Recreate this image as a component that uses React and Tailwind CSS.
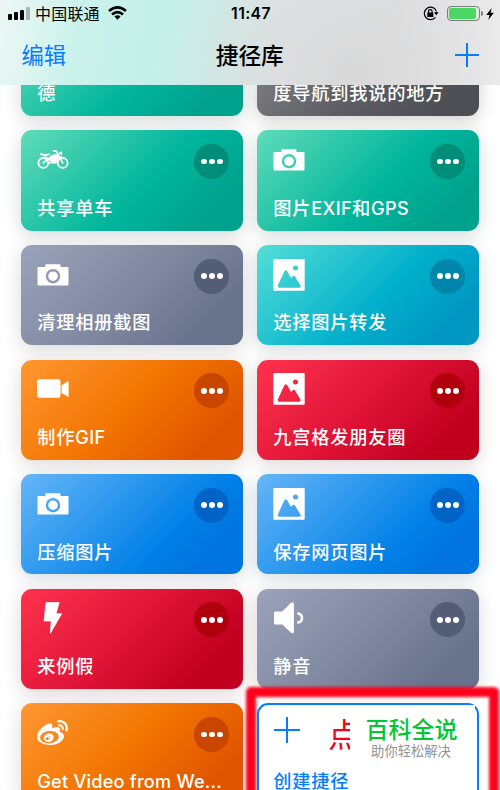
import { FaWeibo } from "react-icons/fa";

const GREEN = { card: "bg-[linear-gradient(135deg,#60dcb9_0%,#00b59c_56%,#00a18d_86%)] shadow-[0_4px_18px_rgba(0,60,50,0.18)]", dot: "bg-[#008d79]" };
const GRAY = { card: "bg-[linear-gradient(135deg,#9aa3b9_0%,#7f889f_50%,#69728b_84%)] shadow-[0_4px_18px_rgba(50,45,40,0.18)]", dot: "bg-[#535d75]" };
const DARK = { card: "bg-[linear-gradient(135deg,#8a8b91_0%,#5c5d62_56%,#4e4f54_86%)] shadow-[0_4px_18px_rgba(50,40,35,0.22)]", dot: "bg-[#404146]" };
const CYAN = { card: "bg-[linear-gradient(135deg,#54ded8_0%,#00afcb_56%,#0097c2_84%)] shadow-[0_4px_18px_rgba(0,50,60,0.18)]", dot: "bg-[#0086aa]" };
const ORANGE = { card: "bg-[linear-gradient(135deg,#ff9732_0%,#f27500_48%,#e05500_84%)] shadow-[0_4px_18px_rgba(90,45,20,0.18)]", dot: "bg-[#c84600]" };
const RED = { card: "bg-[linear-gradient(135deg,#ff324e_0%,#dd1235_50%,#c1001f_82%)] shadow-[0_4px_18px_rgba(90,20,30,0.18)]", dot: "bg-[#b0000c]" };
const BLUE = { card: "bg-[linear-gradient(135deg,#66b6f7_0%,#0080e7_66%,#0074e0_84%)] shadow-[0_4px_18px_rgba(0,50,90,0.18)]", dot: "bg-[#0064c6]" };

function Camera() {
  return (
    <svg width="32" height="32" viewBox="0 0 32 32" fill="white">
      <path fillRule="evenodd" d="M1.3 8H8.3V6.2Q8.3 5.3 9.2 5.3H22.6Q23.5 5.3 23.5 6.2V8H30.7Q31.5 8 31.5 8.8V25.6Q31.5 26.4 30.7 26.4H1.3Q.5 26.4 .5 25.6V8.8Q.5 8 1.3 8ZM16 10a7.2 7.2 0 1 0 0 14.4a7.2 7.2 0 1 0 0-14.4Z" />
      <circle cx="16" cy="17.2" r="4.8" />
    </svg>
  );
}

function Picture() {
  return (
    <svg width="32" height="32" viewBox="0 0 32 32" fill="white">
      <path fillRule="evenodd" d="M1.3 0H30.7Q31.7 0 31.7 1V30.8Q31.7 31.8 30.7 31.8H1.3Q.3 31.8 .3 30.8V1Q.3 0 1.3 0ZM22.5 6.4a2.5 2.5 0 1 0 0 5a2.5 2.5 0 1 0 0-5ZM11.5 12.1L4.9 26.3Q4.3 28.7 6.2 28.8H26Q28.3 28.7 27.4 26.5L21.7 17.1Q20.7 16.1 19.6 17.3L18 19L14.1 12.1Q12.7 10.3 11.5 12.1Z" />
    </svg>
  );
}

function Video() {
  return (
    <svg width="32" height="32" viewBox="0 0 32 32" fill="white">
      <rect x="0" y="6.2" width="23.5" height="18.6" rx="2.3" />
      <path d="M24.5 12.4L31.6 7.8V24L24.5 20Z" />
    </svg>
  );
}

function Bolt() {
  return (
    <svg width="32" height="32" viewBox="0 0 32 32" fill="white" stroke="white" strokeWidth="0.8" strokeLinejoin="round">
      <path d="M9 .6H22.1L19 11.7H24.6L13.4 31.2L14.2 18.9H7.1Z" />
    </svg>
  );
}

function Speaker() {
  return (
    <svg width="32" height="32" viewBox="0 0 32 32" fill="white">
      <path d="M2.5 9.4H9.2L18 .8Q20.9-.7 20.9 1.9V29.7Q20.9 32.4 18 30.8L9.2 22.4H2.5Q1 22.4 1 20.9V10.9Q1 9.4 2.5 9.4Z" />
      <path d="M25.3 11.4Q29 12.1 29 15.9T25.3 20.5" fill="none" stroke="white" strokeWidth="2.5" strokeLinecap="round" />
    </svg>
  );
}

function Motorcycle() {
  return (
    <svg width="32" height="32" viewBox="0 0 32 32" fill="none" stroke="white" strokeLinecap="round" strokeLinejoin="round">
      <circle cx="6.3" cy="18.9" r="4.9" strokeWidth="1.8" />
      <circle cx="25.7" cy="18.9" r="4.9" strokeWidth="1.8" />
      <path d="M6.3 18.9L11.2 14.8M16.5 6.8L19.3 7.1L25.7 18.9" strokeWidth="1.7" />
      <path d="M4 10.3Q8 11.6 11.7 10.4" strokeWidth="2" />
      <path d="M7 13.3Q10.6 12.3 12.3 16.4" strokeWidth="1.3" />
      <path d="M12 13.8Q15.2 10.5 20 10.5L22.5 14.2Q19.5 14.8 18.5 17.4H14.2Z" fill="white" strokeWidth="1.2" />
      <path d="M11.8 18.8H19Q19.7 14 24.6 12.7" strokeWidth="1.4" />
      <path d="M22.5 9L24.7 8L24.5 10.7Z" fill="white" strokeWidth="1.1" />
    </svg>
  );
}

function Weibo() {
  return <FaWeibo className="mt-[1px] size-[31px] text-white" />;
}

function Card({ tone, Icon, title }) {
  return (
    <section className={`flex flex-col justify-between rounded-[11px] pl-4 pr-[13.5px] ${tone.card}`}>
      <div className="flex items-start justify-between pt-[13.7px]">
        <div className="h-8 w-8">{Icon && <Icon />}</div>
        <button className={`flex size-[35px] items-center justify-center gap-[2.3px] rounded-full ${tone.dot}`}>
          <i className="size-[5.7px] rounded-full bg-white" />
          <i className="size-[5.7px] rounded-full bg-white" />
          <i className="size-[5.7px] rounded-full bg-white" />
        </button>
      </div>
      <h2 className="whitespace-nowrap pb-[9.7px] text-[18.2px] font-medium leading-[26px] tracking-[0.8px] text-white">{title}</h2>
    </section>
  );
}

const cards = [
  { tone: GREEN, title: "德" },
  { tone: DARK, title: "度导航到我说的地方" },
  { tone: GREEN, Icon: Motorcycle, title: "共享单车" },
  { tone: GREEN, Icon: Camera, title: <>图片<span className="tracking-[0.35px]">EXIF</span>和<span className="tracking-[0.35px]">GPS</span></> },
  { tone: GRAY, Icon: Camera, title: "清理相册截图" },
  { tone: CYAN, Icon: Picture, title: "选择图片转发" },
  { tone: ORANGE, Icon: Video, title: <>制作<span className="tracking-[0.35px]">GIF</span></> },
  { tone: RED, Icon: Picture, title: "九宫格发朋友圈" },
  { tone: BLUE, Icon: Camera, title: "压缩图片" },
  { tone: BLUE, Icon: Picture, title: "保存网页图片" },
  { tone: RED, Icon: Bolt, title: "来例假" },
  { tone: GRAY, Icon: Speaker, title: "静音" },
  { tone: ORANGE, Icon: Weibo, title: <span className="tracking-[0.2px]">Get Video from We...</span> },
];

function StatusBar() {
  return (
    <div className="flex h-[27px] items-center justify-between pl-2 pr-[6px] text-black">
      <div className="flex w-[200px] items-center">
        <div className="flex h-[13px] items-end gap-[2px]">
          <i className="h-[6px] w-1 rounded-[1px] bg-black" />
          <i className="h-2 w-1 rounded-[1px] bg-black" />
          <i className="h-[10.5px] w-1 rounded-[1px] bg-black" />
          <i className="h-[13px] w-1 rounded-[1px] bg-black/25" />
        </div>
        <span className="ml-[5px] text-[16px] leading-[26px] tracking-[0.2px]">中国联通</span>
        <svg className="-mt-[1px] ml-[8.5px]" width="19" height="14" viewBox="0 0 19 14" fill="none" stroke="black" strokeWidth="2.6">
          <path d="M1 5.1Q9.5-2.3 18 5.1" />
          <path d="M4 8.4Q9.5 3.7 15 8.4" />
          <path d="M6.4 10.6Q9.5 8 12.6 10.6L9.5 13.8Z" fill="black" stroke="none" />
        </svg>
      </div>
      <time className="text-[15.8px] font-semibold tracking-[0.35px]">11:47</time>
      <div className="flex w-[200px] items-center justify-end">
        <svg width="16" height="15" viewBox="0 0 16 15" fill="none" stroke="black">
          <path d="M13.2 4.8A6.2 6.2 0 1 0 12.4 11.3M13.4 5.5V8" strokeWidth="1.3" />
          <path d="M10.9 6.3H15.6L13.3 9.2Z" fill="black" stroke="none" />
          <path d="M5.5 7V5.3Q5.5 3.6 7.3 3.6T9.1 5.3V7" strokeWidth="1.2" />
          <rect x="4.3" y="6.4" width="6" height="4.7" rx=".6" fill="black" stroke="none" />
        </svg>
        <div className="ml-2 flex h-[15px] w-[32.5px] rounded-[4px] border border-black/45 p-[1.3px]">
          <i className="h-full w-[26.5px] rounded-[2px] bg-[#4bd763]" />
        </div>
        <i className="ml-[1px] h-[5px] w-[2px] rounded-r-full bg-black/45" />
        <svg className="ml-[3.5px]" width="8" height="12" viewBox="0 0 8 12"><path d="M5.7 0L.2 7H3.5L2.3 12L7.8 4.8H4.6Z" fill="black" /></svg>
      </div>
    </div>
  );
}

export default function App() {
  return (
    <div className="relative h-[790px] w-[500px] overflow-hidden bg-white font-['Inter','Noto_Sans_CJK_SC',sans-serif]">
      <header className="relative z-10 h-[85px] bg-[radial-gradient(ellipse_180px_150px_at_350px_75px,#d9d9da,transparent),linear-gradient(100deg,#edf7f5_0%,#caf2eb_16%,#c4f0ea_32%,#ceebe7_43%,#e0e4e4_56%,#dedfe0_76%,#eeeeef_100%)]">
        <StatusBar />
        <div className="flex h-[58px] items-center justify-between pl-[21.5px] pr-[21px]">
          <button className="w-[100px] text-left text-[22.3px] text-[#087cff]">编辑</button>
          <h1 className="-ml-[1px] pt-[1px] text-[22.7px] font-medium text-black">捷径库</h1>
          <div className="flex w-[100px] justify-end">
            <svg className="-mt-[2px]" width="24" height="24" viewBox="0 0 24 24" stroke="#087cff" strokeWidth="2"><path d="M0 12H24M12 0V24" /></svg>
          </div>
        </div>
      </header>

      <main className="-mt-[69.2px] grid auto-rows-[100.2px] grid-cols-2 gap-x-[14.6px] gap-y-[14.4px] px-[21.3px]">
        {cards.map((c, i) => (
          <Card key={i} {...c} />
        ))}
        <section className="flex flex-col justify-between rounded-[11px] border-2 border-[#087cff] bg-white pl-[14px]">
          <svg className="mt-[11px]" width="28" height="28" viewBox="0 0 28 28" stroke="#087cff" strokeWidth="2"><path d="M1 14H27M14 1V27" /></svg>
          <h2 className="pb-[7.5px] text-[18.2px] font-medium leading-[26px] tracking-[0.8px] text-[#087cff]">创建捷径</h2>
        </section>
      </main>

      <div className="absolute left-[245.5px] top-[686.5px] h-[140px] w-[253px] rounded-[5px] border-[10.5px] border-[#ff001b] blur-[1.4px]" />
      <span className="absolute left-[328px] top-[711px] text-[33px] leading-[48px] text-[#f5001d]">点</span>
      <aside className="absolute left-[350px] top-[705px] flex h-[85px] w-[125px] flex-col items-center bg-white pt-[9px]">
        <strong className="-ml-[2px] text-[23px] font-medium leading-[32px] text-[#00c832]">百科全说</strong>
        <span className="-ml-[3px] text-[13.3px] leading-[11px] text-[#929292]">助你轻松解决</span>
      </aside>
    </div>
  );
}
